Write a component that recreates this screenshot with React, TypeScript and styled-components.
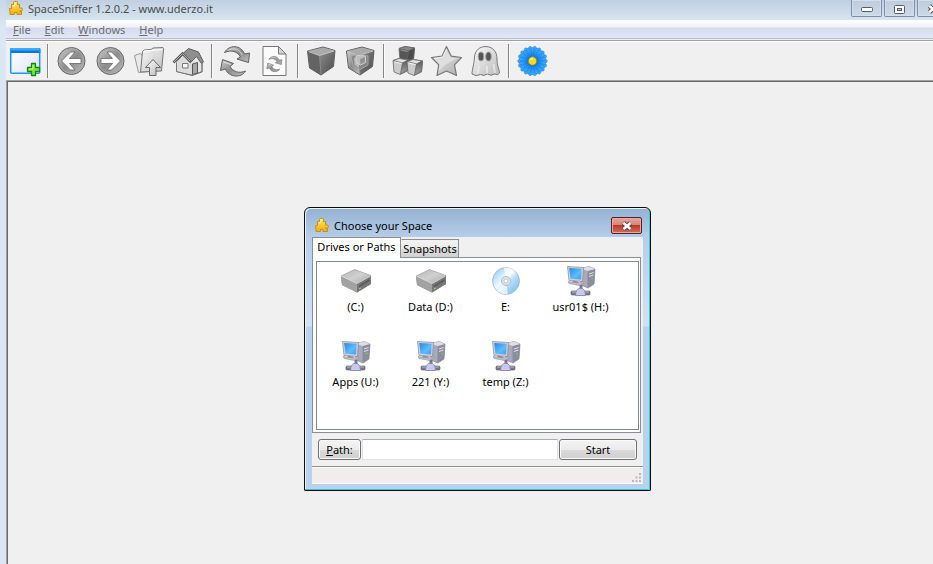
import React, { useState } from 'react';
import styled, { createGlobalStyle } from 'styled-components';

const Global = createGlobalStyle`
  *, *::before, *::after { box-sizing: border-box; }
  html, body, #root { height: 100%; }
  body { margin: 0; overflow: hidden; background: #f0f0f0; }
  button, input { font: inherit; color: inherit; }
`;

const Frame = styled.div`
  position: relative;
  display: flex;
  flex-direction: column;
  height: 100%;
  padding-left: 6px;
  overflow: hidden;
  background: linear-gradient(#c9d8e7, #dbe7f4 30px, #d9e5f3);
  font-family: 'Noto Sans', sans-serif;
  font-size: 11px;
  color: #4c4c4c;
`;

const TitleBar = styled.header`
  display: flex;
  flex: none;
  align-items: flex-start;
  height: 20px;
  padding-left: 2px;
  background: linear-gradient(#c0d0e1, #d7e4f0);
`;

const TitleIcon = styled.svg`
  flex: none;
  width: 16px;
  height: 16px;
`;

const Title = styled.h1`
  flex: 1;
  margin: 0;
  padding-left: 4px;
  font-size: 11px;
  font-weight: 400;
  line-height: 18px;
  white-space: nowrap;
`;

const WindowButtons = styled.div`
  display: flex;
  flex: none;
  gap: 2px;
  margin-right: -15px;
`;

const WindowButton = styled.button`
  display: flex;
  align-items: center;
  justify-content: center;
  width: 31px;
  height: 17px;
  padding: 2px 0 0;
  border: 1px solid #7b8da9;
  border-top: 0;
  border-radius: 0 0 2px 2px;
  background: linear-gradient(#bdcbdb, #cbd9e8);
  box-shadow: inset 0 0 0 1px #d3dfec;
`;

const MenuBar = styled.nav`
  display: flex;
  flex: none;
  gap: 14px;
  height: 19px;
  padding-left: 7px;
  border-bottom: 1px solid #b6bccf;
  background: linear-gradient(#ffffff, #eef1f8 7px, #d6dbee 8px, #e2e7f6);
`;

const MenuItem = styled.button`
  padding: 0;
  border: 0;
  background: none;
  line-height: 19px;
  color: #6d6d6d;

  &::first-letter { text-decoration: underline; }
`;

const Toolbar = styled.div`
  display: flex;
  flex: none;
  height: 41px;
  border-top: 1px solid #f0f0f0;
  background: linear-gradient(#a0a0a0 1px, #ffffff 1px, #ffffff 2px, #f0f0f0 2px);
`;

const ToolButton = styled.button`
  display: flex;
  flex: none;
  align-items: center;
  justify-content: center;
  width: 39px;
  padding: 2px 0 0;
  border: 0;
  background: none;

  &:first-child { width: 38px; }
  svg { flex: none; width: 33px; height: 34px; }
`;

const Separator = styled.span`
  flex: none;
  width: 2px;
  margin: 4px 3px 2px;
  border-left: 1px solid #858585;
  border-right: 1px solid #fafafa;
`;

const Workspace = styled.main`
  flex: 1;
  border-top: 1px solid #a0a0a0;
  border-left: 1px solid #a0a0a0;
  background: #f0f0f0;
  box-shadow: inset 1px 1px 0 #696969;
`;

const Dialog = styled.section`
  position: absolute;
  left: 304px;
  top: 207px;
  width: 347px;
  padding: 1px 7px 6px;
  border: 1px solid #0c0c0c;
  border-radius: 6px 6px 1px 1px;
  background: linear-gradient(#95b2d2, #b6cee9 30px, #d2e2f5 118px, #b9d1ea 119px, #b9d1ea);
  box-shadow: inset -1px -1px 0 #35c9dd, inset 1px 1px 0 #eaf3fc;
  color: #000;
`;

const DialogTitleBar = styled.header`
  display: flex;
  align-items: flex-start;
  height: 28px;
  padding: 8px 1px 0 2px;
`;

const DialogTitle = styled.h2`
  flex: 1;
  margin: 0;
  padding-left: 4px;
  font-size: 11px;
  font-weight: 400;
  line-height: 17px;
`;

const CloseButton = styled.button`
  display: flex;
  align-items: center;
  justify-content: center;
  width: 31px;
  height: 17px;
  padding: 0;
  border: 1px solid #54202a;
  border-radius: 2px;
  background: linear-gradient(#e5a79c, #d88375 45%, #bb3a27 50%, #d0705b);
  box-shadow: inset 0 0 0 1px #e7aaa0;
`;

const DialogBody = styled.div`
  background: #f0f0f0;
`;

const Tabs = styled.div`
  display: flex;
  align-items: flex-end;
  height: 20px;
`;

const Tab = styled.button<{ $active: boolean }>`
  position: relative;
  z-index: ${(p) => (p.$active ? 1 : 0)};
  width: ${(p) => (p.$active ? 89 : 58)}px;
  height: ${(p) => (p.$active ? 21 : 18)}px;
  margin-bottom: ${(p) => (p.$active ? -1 : 0)}px;
  padding: ${(p) => (p.$active ? '0 0 2px' : '0')};
  border: 1px solid #8a8d96;
  border-left-color: ${(p) => (p.$active ? '#8a8d96' : 'transparent')};
  border-bottom: 0;
  background: ${(p) => (p.$active ? '#fff' : 'linear-gradient(#f2f2f2, #ebebeb 50%, #dcdcdc 51%, #d2d2d2)')};
  line-height: 16px;
  white-space: nowrap;
`;

const TabPanel = styled.div`
  margin-right: 2px;
  padding: 3px 1px 2px 3px;
  border: 1px solid #8a8d96;
  background: #fff;
`;

const DriveList = styled.ul`
  display: grid;
  grid-template-columns: repeat(auto-fill, 75px);
  grid-auto-rows: 75px;
  align-content: start;
  height: 169px;
  margin: 0;
  padding: 3px 0 0 1px;
  border: 1px solid #828790;
  list-style: none;
`;

const Drive = styled.button`
  display: flex;
  flex-direction: column;
  align-items: center;
  width: 75px;
  padding: 0;
  border: 0;
  background: none;
  line-height: 16px;
  white-space: nowrap;

  svg { width: 32px; height: 32px; margin-bottom: 2px; }
`;

const PathRow = styled.form`
  display: flex;
  gap: 1px;
  padding: 6px 6px;
`;

const PushButton = styled.button<{ $wide?: boolean }>`
  width: ${(p) => (p.$wide ? 78 : 43)}px;
  height: 21px;
  padding: 0;
  border: 1px solid #707070;
  border-radius: 3px;
  background: linear-gradient(#f3f3f3, #ebebeb 50%, #dadada 51%, #cfcfcf);
  box-shadow: inset 0 0 0 1px #fafafa;
  line-height: 18px;

  &::first-letter { text-decoration: ${(p) => (p.$wide ? 'none' : 'underline')}; }
`;

const PathInput = styled.input`
  flex: 1;
  min-width: 0;
  height: 21px;
  padding: 0 4px;
  border: 1px solid #e2e3ea;
  border-top-color: #abadb3;
  background: #fff;
`;

const StatusBar = styled.footer`
  display: flex;
  align-items: flex-end;
  justify-content: flex-end;
  height: 18px;
  padding: 0 2px 1px;
  border-top: 1px solid #8e8e8e;
  border-bottom: 1px solid #fff;
  background: linear-gradient(#fff 1px, #f1edec 1px);

  svg { width: 9px; height: 9px; }
`;

const Gradients = () => (
  <svg width="0" height="0" aria-hidden="true">
    <defs>
      <linearGradient id="steel" x1="0" y1="0" x2="1" y2="1">
        <stop offset="0" stopColor="#d0d0d0" />
        <stop offset=".5" stopColor="#8c8c8c" />
        <stop offset="1" stopColor="#c0c0c0" />
      </linearGradient>
      <linearGradient id="pale" x1="0" y1="0" x2="1" y2="1">
        <stop offset="0" stopColor="#fcfcfc" />
        <stop offset="1" stopColor="#b9b9b9" />
      </linearGradient>
      <linearGradient id="silver" x1="0" y1="0" x2="1" y2="1">
        <stop offset="0" stopColor="#b4b4b4" />
        <stop offset=".5" stopColor="#d0d0d0" />
        <stop offset="1" stopColor="#a8a8a8" />
      </linearGradient>
      <linearGradient id="dark" x1="0" y1="0" x2="1" y2="1">
        <stop offset="0" stopColor="#8d8d8d" />
        <stop offset="1" stopColor="#4a4a4a" />
      </linearGradient>
      <linearGradient id="dusk" x1="0" y1="0" x2="0" y2="1">
        <stop offset="0" stopColor="#5c5c5c" />
        <stop offset="1" stopColor="#a2a2a2" />
      </linearGradient>
      <linearGradient id="gold" x1="0" y1="0" x2="0" y2="1">
        <stop offset="0" stopColor="#ffe95c" />
        <stop offset="1" stopColor="#efac13" />
      </linearGradient>
      <linearGradient id="screen" x1="0" y1="0" x2="1" y2="1">
        <stop offset="0" stopColor="#238be0" />
        <stop offset=".6" stopColor="#5fbcff" />
        <stop offset="1" stopColor="#3b9ced" />
      </linearGradient>
      <linearGradient id="glass" x1="0" y1="0" x2="1" y2="1">
        <stop offset="0" stopColor="#fff" />
        <stop offset="1" stopColor="#e2e2ff" />
      </linearGradient>
      <linearGradient id="disc" x1="0" y1="0" x2="1" y2="1">
        <stop offset="0" stopColor="#7fc4f2" />
        <stop offset=".3" stopColor="#cdeafd" />
        <stop offset=".45" stopColor="#f4fbff" />
        <stop offset=".6" stopColor="#b9dcf5" />
        <stop offset=".8" stopColor="#8ecbf3" />
        <stop offset="1" stopColor="#c9e8fb" />
      </linearGradient>
      <linearGradient id="petal" x1="0" y1="0" x2="0" y2="1">
        <stop offset="0" stopColor="#42aefb" />
        <stop offset=".5" stopColor="#1c8cf0" />
        <stop offset="1" stopColor="#0a52b8" />
      </linearGradient>
    </defs>
  </svg>
);

const Puzzle = () => (
  <TitleIcon viewBox="0 0 16 16" aria-hidden="true">
    <path
      d="M3.500 4.500H5.500V2.500Q5.500 1.500 6.500 1.500H8.500Q9.500 1.500 9.500 2.500V4.500H11.500V8H12.500Q14.500 7.500 14.500 9.500Q14.500 11.500 12.500 11H11.500V11.500H13.500V14.500H9V12.500H6.500V14.500H2V10.500H1.500V8.500H3.500Z"
      fill="url(#gold)" stroke="#cb8d18" strokeLinejoin="round"
    />
    <path d="M4.500 5.800H6.800V3H8" fill="none" stroke="#fff7ad" />
  </TitleIcon>
);

const Icon = ({ children }: { children: React.ReactNode }) => (
  <svg viewBox="0 0 33 34" aria-hidden="true">{children}</svg>
);

const NewViewIcon = () => (
  <Icon>
    <rect x="1.7" y="4.7" width="29" height="24.5" rx="1" fill="url(#glass)" stroke="#1997f5" strokeWidth="1.5" />
    <path d="M1 5Q1 4 2 4H30.500Q31.500 4 31.500 5V9H1Z" fill="#1596f8" />
    <path d="M2 5H30.500" stroke="#62c0ff" />
    <path d="M2 8H30.500" stroke="#0756bd" />
    <path d="M22.500 19.500H26.500V23.500H30.500V27.500H26.500V31.500H22.500V27.500H18.500V23.500H22.500Z" fill="#7ee33b" stroke="#16860c" strokeWidth="1.3" strokeLinejoin="round" />
    <path d="M24 21V25H20" fill="none" stroke="#c2ff84" />
  </Icon>
);

const ArrowIcon = ({ flip = false }: { flip?: boolean }) => (
  <Icon>
    <circle cx="16.500" cy="17" r="13.500" fill="url(#steel)" stroke="#666" strokeWidth="1" />
    <circle cx="16.500" cy="17" r="12.300" fill="none" stroke="#aaa" />
    <g transform={flip ? 'matrix(-1 0 0 1 33 0)' : undefined}>
      <path d="M6.500 17L15.500 8H20L14.500 14.500H26V19.500H14.500L20 26H15.500Z" fill="#fff" stroke="#666" strokeWidth=".8" strokeLinejoin="round" />
    </g>
  </Icon>
);

const FolderUpIcon = () => (
  <Icon>
    <path d="M1.500 11.500L7 9.500L9 11L21 8V27L5.500 28.500Z" fill="#e9e9e9" stroke="#999" />
    <path d="M9.500 7.500L11 6L18 5.500L20 4L30 3.500Q31 4 30.500 6L28.500 27L7.500 28Z" fill="url(#pale)" fillOpacity=".9" stroke="#777" strokeLinejoin="round" />
    <path d="M11 7L29 5.500" stroke="#fff" />
    <path d="M20 15.500L27.500 23.500H23V31.500H16.500V23.500H12.500Z" fill="url(#pale)" stroke="#666" strokeLinejoin="round" />
  </Icon>
);

const HomeIcon = () => (
  <Icon>
    <path d="M20 14L24.500 9L30 18V27.500L20 31.500Z" fill="#e7e7e7" stroke="#777" />
    <path d="M4.500 18L10.500 11L20 19V31L4.500 27.500Z" fill="#d6d6d6" stroke="#686868" />
    <path d="M4.500 18L12 12H22V31L4.500 27.500Z" fill="#dcdcdc" />
    <path d="M11 9.500L16.500 4.500L26.500 8L31.500 18L29.500 19.500L24.500 12.500L18.500 18.500Z" fill="#8f8f8f" stroke="#5c5c5c" strokeLinejoin="round" />
    <path d="M1.500 18.500L10.500 9.500L18.500 18" fill="none" stroke="#5c5c5c" strokeWidth="2.500" />
    <path d="M2 18L10.500 9.500L18 17" fill="none" stroke="#c8c8c8" strokeWidth=".8" />
    <path d="M10.500 19.500H16V24H10.500Z" fill="#f6f6f6" stroke="#777" />
    <path d="M20.500 20L25.500 18.500V29L20.500 30.500Z" fill="#a8a8a8" stroke="#555" />
    <path d="M4.500 19V27.500L20 31.500L30 28V19" fill="none" stroke="#777" />
  </Icon>
);

const RefreshArrows = () => (
  <g fill="url(#steel)" stroke="#606060" strokeLinejoin="round">
    <path d="M5.500 8.500C10 .5 22 .5 25.500 10L30.500 9L29.500 18.500L18 15L21.500 13C18.500 7.500 12.500 5.500 5.500 8.500Z" />
    <path d="M26.500 27C22.500 34.500 9.500 33.500 6.500 25L1.500 26.500L3.500 15.500L14.500 19.500L11 22.500C14 27.500 20 30 26.500 27Z" />
    <path d="M10 6C16 3 21 6 23 11" fill="none" stroke="#d4d4d4" />
    <path d="M4.500 18L12 20.500" fill="none" stroke="#e2e2e2" />
  </g>
);

const RefreshIcon = () => <Icon><RefreshArrows /></Icon>;

const PageRefreshIcon = () => (
  <Icon>
    <path d="M5 2.500H20.500L28 10V31.500H5Z" fill="#fbfbfb" stroke="#777" />
    <path d="M20.500 2.500V10H28Z" fill="#d4d4d4" stroke="#777" strokeLinejoin="round" />
    <g transform="translate(8 11) scale(.52)"><RefreshArrows /></g>
  </Icon>
);

const CubeIcon = ({ nested = false }: { nested?: boolean }) => (
  <Icon>
    <path d="M2.500 7L18 3L30 6.500L28.500 22.500L16 31L4.500 24Z" fill="#777" stroke="#5e5e5e" strokeLinejoin="round" />
    <path d="M3 7L18 3.500L29.500 6.500L14.500 11.500Z" fill="#aaa" />
    <path d="M3 7L14.500 11.500L16 30.500L5 24Z" fill={nested ? 'url(#steel)' : '#636363'} />
    <path d="M14.500 11.500L29.500 6.500L28 22.500L16 30.500Z" fill="url(#dark)" />
    <path d="M3.500 7.500L14.500 11.500L29 7" fill="none" stroke="#c8c8c8" />
    <path d="M14.500 12L16 30" stroke="#909090" strokeWidth=".8" />
    {nested && (
      <g opacity=".9">
        <path d="M7 12L17 10L24 12V21L16 25.500L9 22Z" fill="#888" stroke="#aaa" />
        <path d="M10 13.500L15 15V24L10.500 21Z" fill="#bcbcbc" />
        <path d="M12 12L17.500 11L21.500 12.500V18.500L16.500 21L12.500 19Z" fill="#c4c4c4" stroke="#d8d8d8" />
        <path d="M16 15L21 13V18L16.500 20.500Z" fill="#969696" />
      </g>
    )}
  </Icon>
);

const BoxesIcon = () => (
  <Icon>
    {[
      { x: 7, y: 1, dark: true },
      { x: 1, y: 13, dark: false },
      { x: 15, y: 14, dark: false },
    ].map(({ x, y, dark }) => (
      <g key={x} transform={`translate(${x} ${y})`} stroke="#666" strokeWidth=".8" strokeLinejoin="round">
        <path d="M1 3.500L7 1.500L16.500 3L15.500 14L8 17.500L2 15Z" fill={dark ? '#555' : '#ccc'} />
        <path d="M1 3.500L7 1.500L16.500 3L10.500 6Z" fill={dark ? '#888' : '#e2e2e2'} />
        <path d="M10.500 6L16.500 3L15.500 13L8.500 17Z" fill={dark ? '#4c4c4c' : 'url(#dusk)'} />
        <path d="M2.500 5L9.500 6.500" fill="none" stroke={dark ? '#aaa' : '#fff'} />
      </g>
    ))}
  </Icon>
);

const StarIcon = () => (
  <Icon>
    <path d="M16.500 2.500L21.300 12.200L31.500 13.500L24.500 20.800L26.500 31.500L16.500 27L7 31.500L8.700 20.800L1.500 13.500L12 12.200Z" fill="url(#silver)" stroke="#777" strokeWidth="1.2" strokeLinejoin="round" />
    <path d="M4 14.500L13 13L16.500 5.500L20.500 13.500L28.500 14.500Q20 17 14 22L8.500 27L9.500 20.500Z" fill="#e8e8e8" opacity=".65" />
    <path d="M4 14.500L12.700 13L16.500 5" fill="none" stroke="#f4f4f4" />
  </Icon>
);

const GhostIcon = () => (
  <Icon>
    <path d="M3 30C3 26 5 21 5.500 13C6 6 11 2.500 17 2.500C24.500 3 28 8 28 15C28 22 30.500 26 30.500 29Q29 32 25.500 30Q22 32.500 18.500 30Q15 32.500 11.500 30.500Q7 33 3 30Z" fill="url(#pale)" stroke="#777" />
    <path d="M10 22L8.500 30M18 22V29.500M24.500 20L26 29" fill="none" stroke="#f2f2f2" strokeWidth="2" opacity=".6" />
    <ellipse cx="12" cy="12.500" rx="2.800" ry="4.500" fill="#555" stroke="#aaa" />
    <ellipse cx="19.500" cy="12.500" rx="2.800" ry="4.500" fill="#555" stroke="#aaa" />
  </Icon>
);

const FlowerIcon = () => (
  <Icon>
    {[10, 0].map((turn) => (
      <g key={turn} transform={`rotate(${turn} 16.5 17)`}>
        {Array.from({ length: 18 }, (_, i) => (
          <path key={i} transform={`rotate(${i * 20} 16.5 17)`} d={turn ? 'M16.500 17L14 6Q14.500 2 16.500 2Q18.500 2 19 6Z' : 'M16.500 17L14.500 7Q15 3.500 16.500 3.500Q18 3.500 18.500 7Z'} fill="url(#petal)" stroke="#0e6fd6" strokeWidth=".3" />
        ))}
      </g>
    ))}
    <circle cx="16.500" cy="17" r="4.300" fill="#ffd71d" stroke="#6c862d" strokeWidth=".8" />
    <path d="M14.500 15.500L17 14.500" stroke="#fff697" strokeWidth="1.500" />
  </Icon>
);

const HardDiskIcon = () => (
  <svg viewBox="0 0 32 32" aria-hidden="true">
    <path d="M1 11L14.500 4.500L31 10.500V19L17 27.500L2 20Z" fill="#888" />
    <path d="M1 11L14.500 4.500L31 10.500L17 18.500Z" fill="url(#silver)" stroke="#aaa" strokeWidth=".6" />
    <path d="M1 11L17 18.500V27.500L2 20Z" fill="#a2a2a2" />
    <path d="M17 18.500L31 10.500V19L17 27.500Z" fill="#787878" />
    <path d="M1.500 11L17 18.500L30.500 11" fill="none" stroke="#e6e6e6" strokeWidth=".8" />
    <path d="M19 21.500L29.500 15" stroke="#5a5a5a" strokeWidth="1.500" />
    <path d="M19 24L21 22.800" stroke="#9ade8a" />
  </svg>
);

const DiscIcon = () => (
  <svg viewBox="0 0 32 32" aria-hidden="true">
    <circle cx="16" cy="16" r="13.500" fill="url(#disc)" stroke="#9aaebd" strokeWidth=".7" />
    <path d="M16 16L14 2.500Q21 2 25 6ZM16 16L7 26Q12 30 18 29.500Z" fill="#fff" opacity=".65" />
    <circle cx="16" cy="16" r="4.500" fill="#dce5eb" stroke="#b0bec9" />
    <circle cx="16" cy="16" r="2" fill="#fff" stroke="#adb7bf" strokeWidth=".7" />
  </svg>
);

const NetworkIcon = () => (
  <svg viewBox="0 0 32 32" aria-hidden="true">
    <path d="M16 3.500L24 1.500L30 4L29 19L23 23L16 20Z" fill="#a9a9b9" stroke="#777786" strokeWidth=".6" />
    <path d="M22.500 6L30 4L29 19L22.500 23Z" fill="#8b8c9e" />
    <path d="M16 3.500L24 1.500L30 4L22.500 6Z" fill="#dedee8" />
    <path d="M24 9L28.500 7.500M24 11.500L28.500 10" stroke="#e5e5ee" />
    <circle cx="27" cy="13.500" r="1" fill="#55d94f" />
    <path d="M2.500 1.500L18.500 2.500L17.500 16.500L4 15.500Z" fill="#d0d0da" stroke="#888898" strokeWidth=".7" />
    <path d="M4.200 3L16.700 3.700L16 14.500L5.500 13.700Z" fill="url(#screen)" />
    <path d="M8 15.500L13 16.500L14 18.500L7 18Z" fill="#8c8ca0" />
    <path d="M3 16.500L14 18L18 16.500L19 18L14 20.500L4 18.500Z" fill="#bebfcd" stroke="#888" strokeWidth=".5" />
    <path d="M14.500 20H17.500V25H14.500Z" fill="#7475a5" />
    <rect x="6" y="26" width="19" height="4" rx="1" fill="#77798c" stroke="#555869" strokeWidth=".6" />
    <path d="M7 27H24" stroke="#b8bac6" />
    <path d="M10.500 30.500Q11 24 14 23.500H17.500Q20.500 25 20.500 30.500Z" fill="#c9caeb" stroke="#7778a8" strokeWidth=".7" />
  </svg>
);

const CloseGlyph = () => (
  <svg width="12" height="10" viewBox="0 0 12 10" aria-hidden="true">
    <path d="M2.500 2L9.500 8M9.500 2L2.500 8" stroke="#4b4350" strokeWidth="4.500" />
    <path d="M2.500 2L9.500 8M9.500 2L2.500 8" stroke="#fff" strokeWidth="2.600" />
  </svg>
);

const TOOLS: { label: string; icon: React.ReactNode }[][] = [
  [{ label: 'New view', icon: <NewViewIcon /> }],
  [
    { label: 'Back', icon: <ArrowIcon /> },
    { label: 'Forward', icon: <ArrowIcon flip /> },
    { label: 'Up one folder', icon: <FolderUpIcon /> },
    { label: 'Home', icon: <HomeIcon /> },
  ],
  [
    { label: 'Refresh', icon: <RefreshIcon /> },
    { label: 'Refresh page', icon: <PageRefreshIcon /> },
  ],
  [
    { label: 'Less detail', icon: <CubeIcon /> },
    { label: 'More detail', icon: <CubeIcon nested /> },
  ],
  [
    { label: 'Files', icon: <BoxesIcon /> },
    { label: 'Free space', icon: <StarIcon /> },
    { label: 'Unknown space', icon: <GhostIcon /> },
  ],
  [{ label: 'Donate', icon: <FlowerIcon /> }],
];

const DRIVES = [
  { name: '(C:)', icon: <HardDiskIcon /> },
  { name: 'Data (D:)', icon: <HardDiskIcon /> },
  { name: 'E:', icon: <DiscIcon /> },
  { name: 'usr01$ (H:)', icon: <NetworkIcon /> },
  { name: 'Apps (U:)', icon: <NetworkIcon /> },
  { name: '221 (Y:)', icon: <NetworkIcon /> },
  { name: 'temp (Z:)', icon: <NetworkIcon /> },
];

export default function App() {
  const [path, setPath] = useState('');
  return (
    <>
      <Global />
      <Frame>
        <TitleBar>
          <Puzzle />
          <Title>SpaceSniffer 1.2.0.2 - www.uderzo.it</Title>
          <WindowButtons>
            <WindowButton aria-label="Minimize">
              <svg width="12" height="5" viewBox="0 0 12 5"><rect x=".5" y=".5" width="11" height="4" rx="1" fill="#fff" stroke="#555b6e" /></svg>
            </WindowButton>
            <WindowButton aria-label="Maximize">
              <svg width="11" height="9" viewBox="0 0 11 9">
                <rect x=".5" y=".5" width="10" height="8" rx="1" fill="#fff" stroke="#555b6e" />
                <rect x="3.500" y="3.500" width="4" height="2" fill="#b9c9dc" stroke="#555b6e" />
              </svg>
            </WindowButton>
            <WindowButton aria-label="Close"><CloseGlyph /></WindowButton>
          </WindowButtons>
        </TitleBar>
        <MenuBar>
          {['File', 'Edit', 'Windows', 'Help'].map((name) => <MenuItem key={name}>{name}</MenuItem>)}
        </MenuBar>
        <Toolbar role="toolbar">
          {TOOLS.map((group, i) => (
            <React.Fragment key={i}>
              {i > 0 && <Separator />}
              {group.map((tool) => <ToolButton key={tool.label} aria-label={tool.label}>{tool.icon}</ToolButton>)}
            </React.Fragment>
          ))}
        </Toolbar>
        <Workspace />
        <Dialog role="dialog" aria-labelledby="dialog-title">
          <DialogTitleBar>
            <Puzzle />
            <DialogTitle id="dialog-title">Choose your Space</DialogTitle>
            <CloseButton aria-label="Close dialog"><CloseGlyph /></CloseButton>
          </DialogTitleBar>
          <DialogBody>
            <Tabs role="tablist">
              <Tab role="tab" aria-selected="true" $active>Drives or Paths</Tab>
              <Tab role="tab" aria-selected="false" $active={false}>Snapshots</Tab>
            </Tabs>
            <TabPanel role="tabpanel">
              <DriveList>
                {DRIVES.map((drive) => (
                  <li key={drive.name}><Drive>{drive.icon}{drive.name}</Drive></li>
                ))}
              </DriveList>
            </TabPanel>
            <PathRow onSubmit={(e) => e.preventDefault()}>
              <PushButton type="button">Path:</PushButton>
              <PathInput aria-label="Path" value={path} onChange={(e) => setPath(e.target.value)} />
              <PushButton type="submit" $wide>Start</PushButton>
            </PathRow>
            <StatusBar>
              <svg viewBox="0 0 9 9" aria-hidden="true">
                <path d="M7 0h2v2h-2zM7 3.500h2v2h-2zM3.500 3.500h2v2h-2zM7 7h2v2h-2zM3.500 7h2v2h-2zM0 7h2v2h-2z" fill="#bdb9b8" />
              </svg>
            </StatusBar>
          </DialogBody>
        </Dialog>
        <Gradients />
      </Frame>
    </>
  );
}
